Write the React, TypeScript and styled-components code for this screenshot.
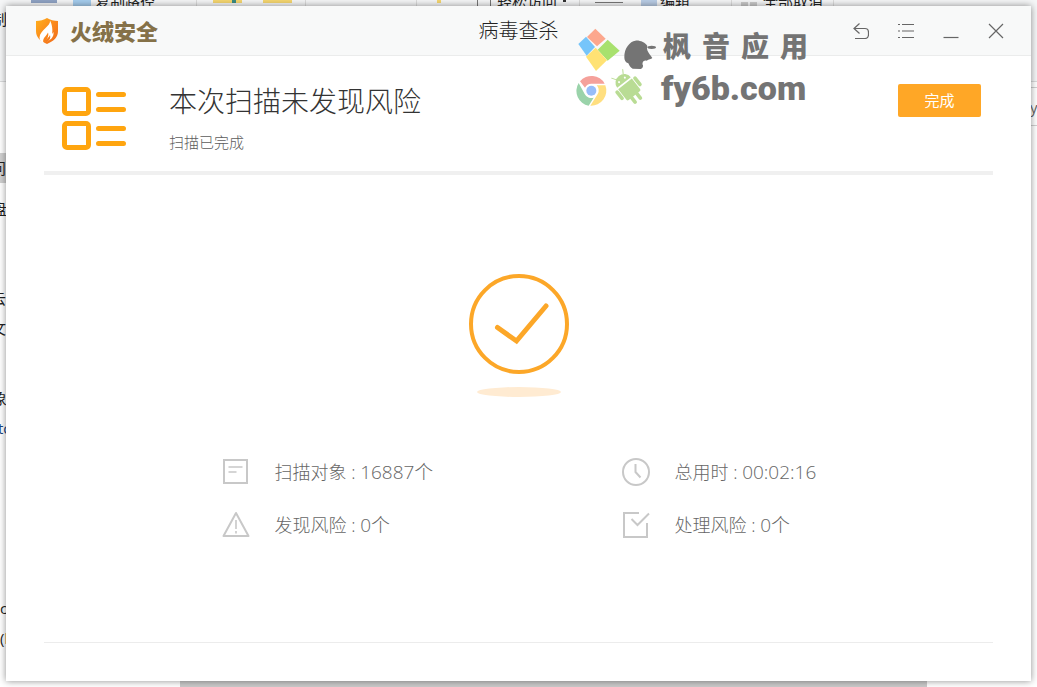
import React from "react";
import styled, { createGlobalStyle } from "styled-components";

const latin = `"Open Sans", "Noto Sans CJK SC", sans-serif`;

const GlobalStyle = createGlobalStyle`
  *, *::before, *::after { box-sizing: border-box; }
  body { margin: 0; font-family: ${latin}; font-weight: 300; color: #444; }
  h1, h2, p, dl, dd, dt { margin: 0; font-weight: 300; }
`;

const Desktop = styled.div`
  position: relative;
  display: flex;
  min-height: 100vh;
  padding: 6px;
  overflow: hidden;
  background: #fff;
`;

/* Explorer window that lies under the application */
const Backdrop = styled.div`
  position: absolute;
  inset: 0;
  overflow: hidden;
  font-size: 15px;
  line-height: 16px;
  font-weight: 400;
  color: #222;
`;

const Ribbon = styled.div`
  height: 82px;
  background: #f5f6f7;
  border-bottom: 1px solid #dadbdc;
`;

const AddressEdge = styled.div`
  height: 39px;
  margin: 5px 0 0 50%;
  border: 1px solid #d0d0d0;
  border-right: 0;
`;

const Scrap = styled.span<{ $x: number; $y: number; $c?: string }>`
  position: absolute;
  left: ${(p) => p.$x}px;
  top: ${(p) => p.$y}px;
  white-space: nowrap;
  color: ${(p) => p.$c ?? "inherit"};
`;

const Patch = styled.span<{ $x: number; $y: number; $w: number; $h: number; $c: string }>`
  position: absolute;
  left: ${(p) => p.$x}px;
  top: ${(p) => p.$y}px;
  width: ${(p) => p.$w}px;
  height: ${(p) => p.$h}px;
  background: ${(p) => p.$c};
`;

const StatusBar = styled.div`
  position: absolute;
  left: 180px;
  right: 110px;
  bottom: 0;
  height: 8px;
  background: #cacaca;
`;

const Window = styled.main`
  position: relative;
  flex: 1;
  min-width: 0;
  display: flex;
  flex-direction: column;
  background: #fff;
  box-shadow: 0 0 7px rgba(0, 0, 0, 0.45);
`;

const TitleBar = styled.header`
  display: grid;
  grid-template-columns: 1fr auto 1fr;
  align-items: center;
  height: 50px;
  padding: 0 20px;
  background: #f8f9f9;
  border-bottom: 1px solid #ebecec;
`;

const Brand = styled.div`
  display: flex;
  align-items: center;
  gap: 11px;
  margin-left: 9px;
  font-size: 22px;
  line-height: 28px;
  font-weight: 900;
  color: #857148;
`;

const WindowTitle = styled.h1`
  font-size: 20px;
  line-height: 28px;
  color: #222;
`;

const Controls = styled.div`
  display: flex;
  justify-content: flex-end;
  gap: 15px;
`;

const IconButton = styled.button`
  display: grid;
  place-items: center;
  width: 30px;
  height: 30px;
  padding: 0;
  border: 0;
  background: none;
  color: #666;
`;

const Content = styled.div`
  flex: 1;
  display: flex;
  flex-direction: column;
  margin: 0 38px 38px;
  border-bottom: 1px solid #ececec;
`;

const Summary = styled.section`
  display: flex;
  align-items: center;
  height: 119px;
  padding: 10px 12px 0 18px;
  border-bottom: 4px solid #f0f0f0;
`;

const SummaryText = styled.div`
  flex: 1;
  margin-left: 43px;
  display: flex;
  flex-direction: column;
  gap: 14px;
  padding-bottom: 2px;
`;

const Headline = styled.h2`
  font-size: 28px;
  line-height: 34px;
  color: #333;
`;

const Note = styled.p`
  font-size: 15px;
  line-height: 20px;
  color: #5c5c5c;
`;

const DoneButton = styled.button`
  align-self: flex-start;
  width: 83px;
  height: 33px;
  margin-top: 18px;
  padding: 0 0 2px;
  border: 0;
  border-radius: 2px;
  background: #ffa726;
  color: #fff;
  font: 400 15px/20px ${latin};
`;

const Result = styled.section`
  flex: 1;
  display: flex;
  flex-direction: column;
  align-items: center;
  justify-content: center;
  gap: 60px;
  padding-bottom: 3px;
`;

const Stats = styled.dl`
  display: grid;
  grid-template-columns: 1fr 1fr;
  row-gap: 23px;
  width: 100%;
  max-width: 800px;
`;

const Stat = styled.div`
  display: flex;
  align-items: center;
  height: 30px;
  padding-left: 103px;
  font-size: 18px;
  line-height: 24px;
  color: #666;
  white-space: pre;

  svg { margin-right: 25px; }
  dd { font-size: 19px; }
`;

const Watermark = styled.aside`
  position: absolute;
  left: 570px;
  top: 22px;
  display: flex;
  gap: 4px;
  color: #747474;
  pointer-events: none;
`;

const WatermarkText = styled.div`
  display: flex;
  flex-direction: column;
`;

const WatermarkName = styled.div`
  display: flex;
  gap: 11px;
  margin-left: 2px;
  font-size: 28px;
  line-height: 36px;
  font-weight: 900;
`;

const WatermarkSite = styled.div`
  font-family: Roboto, "Liberation Sans", sans-serif;
  font-size: 34px;
  line-height: 48px;
  font-weight: 900;
`;

const Shield = () => (
  <svg width="24" height="26" viewBox="0 0 24 26" aria-hidden="true">
    <defs>
      <linearGradient id="shield" x1="0" y1="0" x2="1" y2="1">
        <stop offset="0" stopColor="#ffb11b" />
        <stop offset="0.5" stopColor="#fb8a1c" />
        <stop offset="1" stopColor="#ef6a1a" />
      </linearGradient>
    </defs>
    <path d="M1 3C5 3 9 2 12 0c3 2 7 3 11 3v10c0 6-4 10-11 13C5 23 1 19 1 13Z" fill="url(#shield)" />
    <path d="M15 2.500C16 8 5 12 4.500 19.500 4.500 22 6 24 8.500 25 7 20 11 19 13 14.500 14 17.500 12.500 20 10.500 24 16 22 19 19 18.500 14L17 16C18 12 17 6 15 2.500Z" fill="#fff" />
    <path d="M10 25c0-4 4-5 5-8 1 4-1 6-5 8Z" fill="#f57c1c" />
  </svg>
);

const TasksIcon = () => (
  <svg width="64" height="64" viewBox="0 0 64 64" fill="none" stroke="#ffa50f" strokeWidth="5" strokeLinecap="round" aria-hidden="true">
    <rect x="2.5" y="2.5" width="24" height="24" rx="2.5" />
    <rect x="2.5" y="36.500" width="24" height="24" rx="2.5" />
    <path d="M36.500 7.500h25M36.500 22.500h25M36.500 41.500h25M36.500 56.500h25" />
  </svg>
);

const SuccessArt = () => (
  <svg width="100" height="123" viewBox="0 0 100 123" fill="none" aria-hidden="true">
    <circle cx="50" cy="50" r="48" stroke="#fca728" strokeWidth="4" />
    <path d="M28.500 53.500 47.500 67 77 32" stroke="#fca728" strokeWidth="5" strokeLinecap="round" />
    <ellipse cx="50" cy="118" rx="42" ry="5" fill="#ffebd2" />
  </svg>
);

type StatKind = "objects" | "time" | "found" | "handled";

const statPaths: Record<StatKind, React.ReactNode> = {
  objects: (
    <>
      <path d="M2 2h23v23H2z" />
      <path d="M6.500 9h14M6.500 14h8" strokeWidth="1.600" />
    </>
  ),
  time: (
    <>
      <circle cx="14" cy="14" r="13" />
      <path d="M13.500 6v8l5 5.500" />
    </>
  ),
  found: (
    <>
      <path d="M14 2 26.500 25h-25Z" strokeLinejoin="round" />
      <path d="M14 9v9M14 20v2.500" strokeWidth="1.600" />
    </>
  ),
  handled: (
    <>
      <path d="M17 2H2v24h23V12" />
      <path d="M9.500 8l6 6L27 2.500" />
    </>
  ),
};

const StatIcon = ({ kind }: { kind: StatKind }) => (
  <svg width="28" height="28" viewBox="0 0 28 28" fill="none" stroke="#c8c8c8" strokeWidth="2" aria-hidden="true">
    {statPaths[kind]}
  </svg>
);

const controls = [
  { label: "返回", d: "M6.500 0.500 1 5.500l5.500 5M1 5.500h11q3.500 0 3.500 4v2q0 4-3.500 4H2" },
  { label: "菜单", d: "M0 1.500h2M4 1.500h12M0 8h2M4 8h12M0 14.500h2M4 14.500h12" },
  { label: "最小化", d: "M0.500 14.500h15" },
  { label: "关闭", d: "M1 1l14 14M15 1 1 15" },
];

const stats: { kind: StatKind; label: string; value: string }[] = [
  { kind: "objects", label: "扫描对象", value: "16887个" },
  { kind: "time", label: "总用时", value: "00:02:16" },
  { kind: "found", label: "发现风险", value: "0个" },
  { kind: "handled", label: "处理风险", value: "0个" },
];

const topScraps: [number, string][] = [
  [95, "复制路径"],
  [497, "轻松访问"],
  [660, "编辑"],
  [763, "全部取消"],
];

const sideScraps: [number, number, string, string?][] = [
  [-8, 11, "制"],
  [-9, 160, "问"],
  [-8, 201, "盘"],
  [-9, 290, "云"],
  [-9, 320, "文"],
  [-8, 390, "象"],
  [-2, 420, "to", "#1b4480"],
  [0, 600, "c"],
  [0, 630, "(l"],
];

const WatermarkArt = () => (
  <svg width="81" height="80" viewBox="50 84 243 240" aria-hidden="true">
    <path d="M108 86 139 116 113 139 83 111Z" fill="#fca78d" />
    <path d="M80 110 107 141 82 167 57 132Z" fill="#76c5fa" />
    <path d="M145 119 181 152 145 182 115 149Z" fill="#a8e16e" />
    <path d="M109 143 143 181 110 213 80 170Z" fill="#ffe274" />
    <path d="M195 172C194 145 212 124 228 122 240 120 258 127 264 138 260 150 268 158 279 174 276 178 268 178 262 182 252 178 247 190 251 196 252 202 248 206 244 207L220 206C212 203 210 196 207 190 198 188 195 180 195 172Z" fill="#747474" />
    <ellipse cx="277" cy="142" rx="13" ry="5" fill="#747474" />
    <path d="M62 244A45 45 0 0 1 136 251H96A22 22 0 0 0 77 263Z" fill="#f5a19b" />
    <path d="M58 249 76 282A22 22 0 0 0 103 293L88 317A45 45 0 0 1 58 249Z" fill="#9ad3aa" />
    <path d="M112 256H138A45 45 0 0 1 93 317L115 282A22 22 0 0 0 112 256Z" fill="#ffdf80" />
    <circle cx="96" cy="272" r="15" fill="#97bdf9" />
    <g transform="rotate(-38 210 268)" fill="#b9dc94" stroke="#b9dc94" strokeLinecap="round">
      <path d="M184 242a26 25 0 0 1 52 0Z" stroke="none" />
      <path d="M184 247h52v40q0 5-5 5h-42q-5 0-5-5Z" stroke="none" />
      <path d="M176 252v24M244 252v24M200 292v17M220 292v17" strokeWidth="11" />
      <path d="M196 220l-7-11M224 220l7-11" strokeWidth="3" />
      <circle cx="199" cy="232" r="3" fill="#fff" stroke="none" />
      <circle cx="221" cy="232" r="3" fill="#fff" stroke="none" />
    </g>
  </svg>
);

export default function App() {
  return (
    <Desktop>
      <GlobalStyle />
      <Backdrop aria-hidden="true">
        <Ribbon />
        <AddressEdge />
        <Patch $x={31} $y={0} $w={26} $h={3} $c="#8fa3c4" />
        <Patch $x={73} $y={0} $w={18} $h={6} $c="#a5cdee" />
        <Patch $x={213} $y={0} $w={29} $h={3} $c="#f5d670" />
        <Patch $x={232} $y={0} $w={4} $h={3} $c="#3c8b83" />
        <Patch $x={263} $y={0} $w={29} $h={3} $c="#f5d670" />
        <Patch $x={437} $y={0} $w={4} $h={3} $c="#f5d670" />
        <Patch $x={595} $y={2} $w={28} $h={1} $c="#777" />
        <Patch $x={641} $y={0} $w={16} $h={6} $c="#b9cde6" />
        <Patch $x={196} $y={0} $w={1} $h={6} $c="#dcdcdc" />
        <Patch $x={305} $y={0} $w={1} $h={6} $c="#dcdcdc" />
        <Patch $x={416} $y={0} $w={1} $h={6} $c="#dcdcdc" />
        <Patch $x={477} $y={0} $w={1} $h={6} $c="#777" />
        <Patch $x={490} $y={0} $w={1} $h={6} $c="#777" />
        <Patch $x={563} $y={0} $w={3} $h={2} $c="#333" />
        <Patch $x={579} $y={0} $w={1} $h={6} $c="#dcdcdc" />
        <Patch $x={731} $y={0} $w={1} $h={6} $c="#dcdcdc" />
        <Patch $x={741} $y={2} $w={7} $h={4} $c="#ccc" />
        <Patch $x={750} $y={2} $w={7} $h={4} $c="#ccc" />
        <Patch $x={833} $y={0} $w={1} $h={6} $c="#dcdcdc" />
        <Patch $x={0} $y={153} $w={6} $h={30} $c="#d0d0d0" />
        {topScraps.map(([x, text]) => (
          <Scrap key={text} $x={x} $y={-7}>{text}</Scrap>
        ))}
        {sideScraps.map(([x, y, text, color]) => (
          <Scrap key={y} $x={x} $y={y} $c={color}>{text}</Scrap>
        ))}
        <Scrap $x={1030} $y={99} $c="#666">y</Scrap>
        <StatusBar />
      </Backdrop>

      <Window>
        <TitleBar>
          <Brand>
            <Shield />
            火绒安全
          </Brand>
          <WindowTitle>病毒查杀</WindowTitle>
          <Controls>
            {controls.map((c) => (
              <IconButton key={c.label} type="button" aria-label={c.label}>
                <svg width="16" height="16" viewBox="0 0 16 16" fill="none" stroke="currentColor" strokeWidth="1.200">
                  <path d={c.d} />
                </svg>
              </IconButton>
            ))}
          </Controls>
        </TitleBar>

        <Content>
          <Summary>
            <TasksIcon />
            <SummaryText>
              <Headline>本次扫描未发现风险</Headline>
              <Note>扫描已完成</Note>
            </SummaryText>
            <DoneButton type="button">完成</DoneButton>
          </Summary>

          <Result>
            <SuccessArt />
            <Stats>
              {stats.map((s) => (
                <Stat key={s.kind}>
                  <StatIcon kind={s.kind} />
                  <dt>{s.label} : </dt>
                  <dd>{s.value}</dd>
                </Stat>
              ))}
            </Stats>
          </Result>
        </Content>

        <Watermark>
          <WatermarkArt />
          <WatermarkText>
            <WatermarkName>
              {[..."枫音应用"].map((ch) => (
                <span key={ch}>{ch}</span>
              ))}
            </WatermarkName>
            <WatermarkSite>fy6b.com</WatermarkSite>
          </WatermarkText>
        </Watermark>
      </Window>
    </Desktop>
  );
}
